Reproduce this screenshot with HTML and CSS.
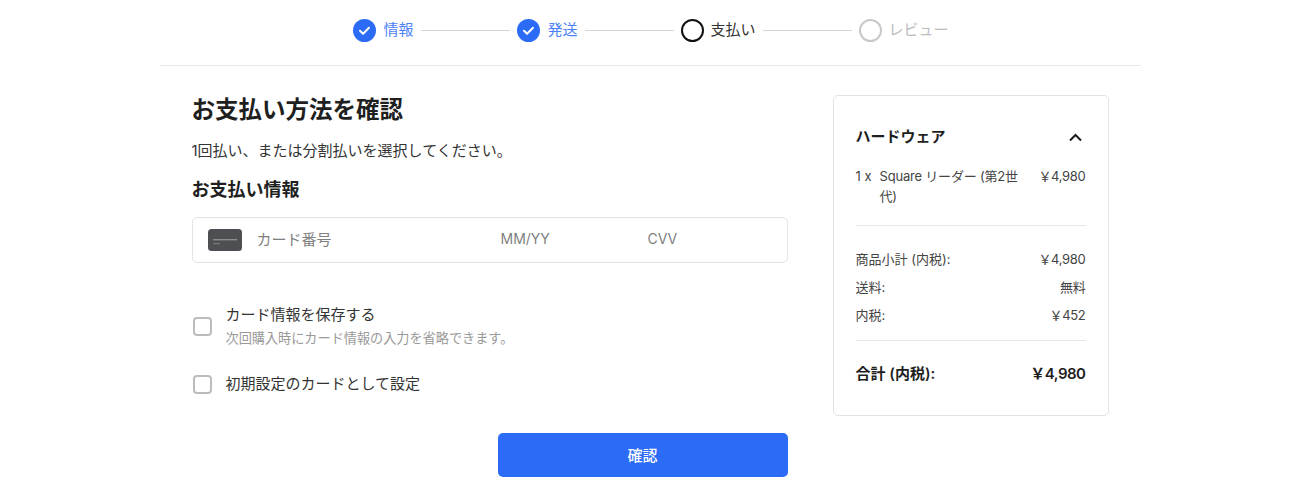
FILE: index.html
```html
<!DOCTYPE html>
<html lang="ja">
<head>
<meta charset="UTF-8">
<meta name="viewport" content="width=device-width, initial-scale=1.0">
<title>お支払い方法を確認</title>
<link rel="stylesheet" href="styles.css">
</head>
<body>
<div class="page">
  <header class="stepper">
    <div class="step done">
      <svg class="step-icon" viewBox="0 0 23 23"><circle cx="11.5" cy="11.5" r="11.5" fill="#2b6bf6"/><path d="M7 11.8l3.1 3 5.9-6" fill="none" stroke="#fff" stroke-width="2" stroke-linecap="round" stroke-linejoin="round"/></svg>
      <span>情報</span>
    </div>
    <div class="step-line"></div>
    <div class="step done">
      <svg class="step-icon" viewBox="0 0 23 23"><circle cx="11.5" cy="11.5" r="11.5" fill="#2b6bf6"/><path d="M7 11.8l3.1 3 5.9-6" fill="none" stroke="#fff" stroke-width="2" stroke-linecap="round" stroke-linejoin="round"/></svg>
      <span>発送</span>
    </div>
    <div class="step-line"></div>
    <div class="step current">
      <svg class="step-icon" viewBox="0 0 23 23"><circle cx="11.5" cy="11.5" r="10.5" fill="none" stroke="#111" stroke-width="2"/></svg>
      <span>支払い</span>
    </div>
    <div class="step-line"></div>
    <div class="step todo">
      <svg class="step-icon" viewBox="0 0 23 23"><circle cx="11.5" cy="11.5" r="10.5" fill="none" stroke="#c8c8c8" stroke-width="2"/></svg>
      <span>レビュー</span>
    </div>
  </header>

  <main class="content">
    <section class="payment">
      <h1>お支払い方法を確認</h1>
      <p class="lead">1回払い、または分割払いを選択してください。</p>
      <h2>お支払い情報</h2>

      <div class="card-field">
        <svg class="card-icon" viewBox="0 0 34 22"><rect width="34" height="22" rx="3.5" fill="#4d4f52"/><rect x="5" y="10" width="24" height="1.4" fill="#8b8d90"/><rect x="5" y="14" width="7" height="1.2" fill="#77797c"/></svg>
        <span class="ph ph-number">カード番号</span>
        <span class="ph ph-date">MM/YY</span>
        <span class="ph ph-cvv">CVV</span>
      </div>

      <div class="option first">
        <span class="checkbox"></span>
        <div>
          <div class="option-label">カード情報を保存する</div>
          <div class="option-note">次回購入時にカード情報の入力を省略できます。</div>
        </div>
      </div>
      <div class="option second">
        <span class="checkbox"></span>
        <div class="option-label">初期設定のカードとして設定</div>
      </div>

      <div class="actions">
        <button type="button" class="confirm">確認</button>
      </div>
    </section>

    <aside class="summary">
      <div class="summary-head">
        <span>ハードウェア</span>
        <svg class="chevron" viewBox="0 0 15 9"><path d="M2 7.5L7.5 2 13 7.5" fill="none" stroke="#1a1a1a" stroke-width="2"/></svg>
      </div>
      <div class="item">
        <span class="qty">1 x</span>
        <span class="item-name">Square リーダー (第2世代)</span>
        <span class="item-price">￥4,980</span>
      </div>
      <hr>
      <div class="row"><span>商品小計 (内税):</span><span class="amount">￥4,980</span></div>
      <div class="row"><span>送料:</span><span class="amount">無料</span></div>
      <div class="row"><span>内税:</span><span class="amount">￥452</span></div>
      <hr class="hr-total">
      <div class="row total"><span>合計 (内税):</span><span class="amount">￥4,980</span></div>
    </aside>
  </main>
</div>
</body>
</html>
```

FILE: styles.css
```css
body {
  margin: 0;
  background: #fff;
  color: #1f1f1f;
  font-family: Inter, "Noto Sans CJK JP", sans-serif;
}

.page {
  width: 981px;
  margin: 0 auto;
}

/* stepper */
.stepper {
  height: 66px;
  box-sizing: border-box;
  border-bottom: 1px solid #e8e8e8;
  display: flex;
  align-items: center;
  justify-content: center;
  gap: 7px;
  padding: 0 0 5px 2px;
}

.step {
  display: flex;
  align-items: center;
  gap: 7px;
  font-size: 15px;
}

.step:first-child {
  margin-right: 1px;
}

.step span {
  line-height: 1;
  padding-bottom: 2px;
}

.step-icon {
  width: 23px;
  height: 23px;
}

.step-line {
  width: 89px;
  height: 1px;
  background: #d4d4d4;
}

.done { color: #4d82f7; }
.current { color: #333; }
.todo { color: #bdbdbd; }

/* main layout */
.content {
  display: flex;
  align-items: flex-start;
  padding: 29px 32px 0;
  gap: 45px;
}

.payment {
  width: 596px;
}

h1 {
  margin: 0;
  font-size: 23.5px;
  line-height: 30px;
  font-weight: 600;
}

.lead {
  margin: 15px 0 0;
  font-size: 15px;
  line-height: 22px;
  color: #333;
}

h2 {
  margin: 15px 0 0;
  font-size: 18px;
  line-height: 26px;
  font-weight: 600;
}

.card-field {
  margin-top: 14px;
  height: 46px;
  box-sizing: border-box;
  border: 1px solid #e3e3e3;
  border-radius: 5px;
  display: flex;
  align-items: center;
  padding-left: 15px;
  font-size: 15px;
  color: #7f7f7f;
}

.card-icon {
  width: 34px;
  height: 22px;
  margin-right: 15px;
}

.ph {
  line-height: 1;
  padding-bottom: 2px;
}

.ph-number { width: 244px; }
.ph-date { width: 147px; font-size: 14px; }
.ph-cvv { font-size: 14px; }

.option {
  display: flex;
  align-items: center;
  gap: 14px;
  padding-left: 1px;
}

.option.first { margin-top: 41px; }
.option.second { margin-top: 25px; }

.checkbox {
  width: 19px;
  height: 19px;
  box-sizing: border-box;
  border: 2px solid #bcbcbc;
  border-radius: 4px;
  flex: none;
}

.option-label {
  font-size: 15px;
  line-height: 22px;
  color: #333;
}

.option-note {
  font-size: 13.15px;
  line-height: 20px;
  margin-top: 2px;
  color: #999;
}

.actions {
  margin-top: 38px;
  display: flex;
  justify-content: flex-end;
}

.confirm {
  width: 290px;
  height: 44px;
  border: 0;
  border-radius: 5px;
  background: #2b6bf6;
  color: #fff;
  padding: 0 0 2px;
  font: 500 15px Inter, "Noto Sans CJK JP", sans-serif;
}

/* order summary */
.summary {
  width: 276px;
  height: 321px;
  box-sizing: border-box;
  border: 1px solid #e3e3e3;
  border-radius: 5px;
  padding: 29px 22px 0 22px;
  font-size: 13px;
  color: #444;
}

.summary-head {
  display: flex;
  align-items: center;
  justify-content: space-between;
  font-size: 15px;
  line-height: 24px;
  font-weight: 600;
  color: #1f1f1f;
}

.chevron {
  width: 15px;
  height: 9px;
  margin-right: 3px;
}

.item {
  display: flex;
  margin-top: 17px;
  line-height: 20px;
}

.qty { width: 24px; flex: none; }
.item-name { width: 143px; flex: none; letter-spacing: -0.2px; }
.item-price { margin-left: auto; letter-spacing: -0.3px; }

hr {
  border: 0;
  border-top: 1px solid #e8e8e8;
  margin: 19px 0 23px;
}

.hr-total { margin: 15px 0 23px; }

.row {
  display: flex;
  justify-content: space-between;
  line-height: 20px;
  margin-bottom: 8px;
}

.amount { letter-spacing: -0.3px; }

.total {
  font-size: 15px;
  font-weight: 600;
  color: #1f1f1f;
}

.total .amount { letter-spacing: -0.5px; }
```
